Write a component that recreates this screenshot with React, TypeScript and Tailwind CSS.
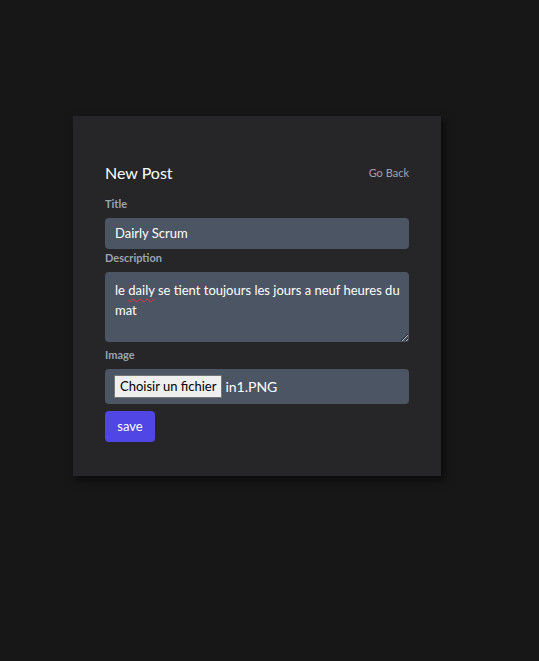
import React from 'react';

const App = () => {
  return (
    <div
      className="min-h-screen w-full bg-[#171717] pt-[116px] pl-[73px]"
      style={{ fontFamily: 'Lato, "Noto Sans", sans-serif' }}
    >
      <div className="w-[368px] bg-[#262628] px-8 pt-[45px] pb-[34px] shadow-[3px_4px_8px_rgba(0,0,0,0.6)]">
        <div className="flex items-center justify-between">
          <h1 className="text-[16px] text-white">New Post</h1>
          <a href="#" className="text-[11px] text-[#9ca3af]">Go Back</a>
        </div>

        <form className="mt-[11px]">
          <label className="block text-[11px] font-bold text-[#9ca3af] leading-[16px]">Title</label>
          <div className="mt-[6px] h-[31px] rounded bg-[#4b5563] px-[10px] flex items-center text-[13px] text-white">
            Dairly Scrum
          </div>

          <label className="mt-[1px] block text-[11px] font-bold text-[#9ca3af] leading-[16px]">Description</label>
          <div className="mt-[6px] h-[70px] resize-y overflow-auto rounded bg-[#4b5563] pl-[10px] pr-[8px] pt-[8px] text-[13px] leading-[20px] text-white">
            le{' '}
            <span className="underline decoration-wavy decoration-red-500 decoration-1 underline-offset-[3px]">daily</span>{' '}
            se tient toujours les jours a neuf heures du mat
          </div>

          <label className="mt-[5px] block text-[11px] font-bold text-[#9ca3af] leading-[16px]">Image</label>
          <div className="mt-[6px] h-[35px] rounded bg-[#4b5563] px-[9px] flex items-center text-[14px] text-white">
            <span className="h-[23px] flex items-center border border-[#767676] bg-[#efefef] px-[5px] text-[13px] text-black">
              Choisir un fichier
            </span>
            <span className="ml-[3px]">in1.PNG</span>
          </div>

          <button
            type="button"
            className="mt-[7px] h-[31px] w-[50px] rounded bg-[#4f46e5] text-[13px] text-white"
          >
            save
          </button>
        </form>
      </div>
    </div>
  );
};

export default App;
